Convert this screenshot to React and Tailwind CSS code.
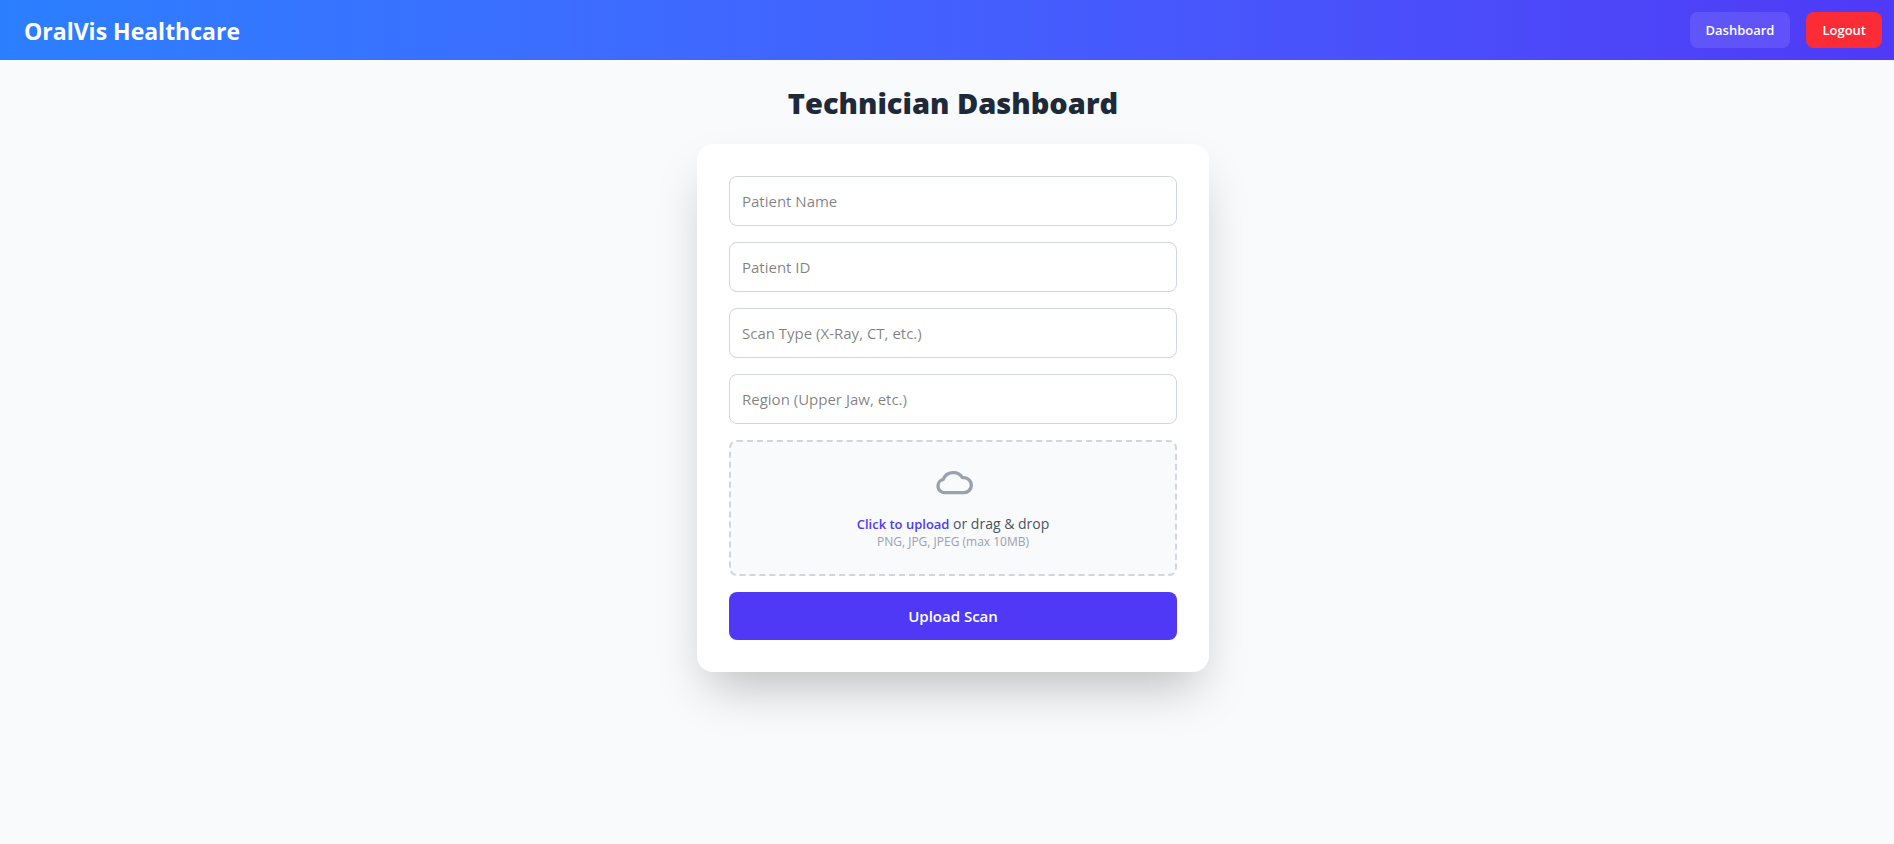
const fields = [
  { id: "patientName", label: "Patient Name" },
  { id: "patientId", label: "Patient ID" },
  { id: "scanType", label: "Scan Type (X-Ray, CT, etc.)" },
  { id: "region", label: "Region (Upper Jaw, etc.)" },
];

function CloudIcon() {
  return (
    <svg
      className="mb-2 size-10 text-gray-400"
      viewBox="0 0 24 24"
      fill="none"
      stroke="currentColor"
      strokeWidth="2"
      strokeLinecap="round"
      strokeLinejoin="round"
      aria-hidden="true"
    >
      <path d="M7 16a4 4 0 01-.88-7.903A6.5 6.5 0 0117.7 7h.8a4.5 4.5 0 010 9H7z" />
    </svg>
  );
}

function Header() {
  return (
    <header className="flex h-[60px] items-center justify-between bg-linear-to-r from-blue-500 to-indigo-600 pr-3 pl-6 text-white">
      <span className="pt-0.5 text-[23px] leading-8 font-bold">OralVis Healthcare</span>
      <nav className="flex items-center gap-4 text-[13px] leading-5 font-semibold">
        <a href="#dashboard" className="rounded-lg bg-white/10 px-4 py-2">
          Dashboard
        </a>
        <button type="button" className="rounded-lg bg-red-500 px-4 py-2">
          Logout
        </button>
      </nav>
    </header>
  );
}

export default function App() {
  return (
    <div className="min-h-screen bg-gray-50 font-['Open_Sans','Noto_Sans',sans-serif]">
      <Header />
      <main className="flex flex-col items-center pt-6 pl-3">
        <h1 className="mb-6 pt-0.5 text-[29px] leading-[34px] font-extrabold text-gray-800">
          Technician Dashboard
        </h1>
        <form className="flex w-full max-w-lg flex-col gap-4 rounded-2xl bg-white p-8 shadow-2xl">
          {fields.map((field) => (
            <input
              key={field.id}
              id={field.id}
              name={field.id}
              type="text"
              aria-label={field.label}
              placeholder={field.label}
              className="w-full rounded-lg border border-gray-300 p-3 text-[15px] leading-6"
            />
          ))}
          <label className="relative flex cursor-pointer flex-col items-center rounded-lg border-2 border-dashed border-gray-300 bg-gray-50 p-6">
            <CloudIcon />
            <span className="text-sm text-gray-600">
              <span className="text-[13px] font-semibold text-indigo-600">Click to upload</span> or drag &amp; drop
            </span>
            <span className="text-xs text-gray-400">PNG, JPG, JPEG (max 10MB)</span>
            <input type="file" accept="image/png,image/jpeg" className="sr-only" />
          </label>
          <button
            type="submit"
            className="w-full rounded-lg bg-indigo-600 py-3 text-[15px] leading-6 font-semibold text-white"
          >
            Upload Scan
          </button>
        </form>
      </main>
    </div>
  );
}
